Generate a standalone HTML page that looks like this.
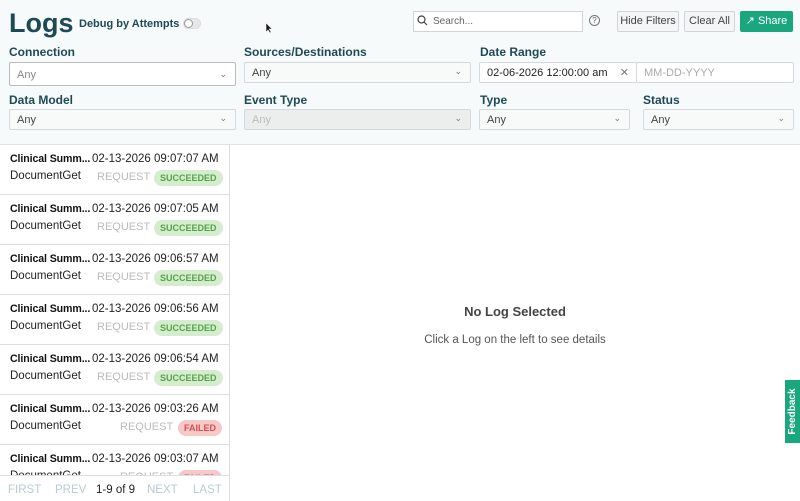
<!DOCTYPE html><html><head><style>
*{box-sizing:border-box;margin:0;padding:0}
body{width:800px;height:501px;overflow:hidden;background:#fff;font-family:"Liberation Sans",sans-serif;position:relative;color:#222}
.hdr{position:absolute;left:0;top:0;width:800px;height:145px;background:#f6fafb;border-bottom:1px solid #dde3e6}
.abs{position:absolute;white-space:nowrap}
.lbl{position:absolute;font-size:12px;font-weight:bold;color:#1e4a55}
.sel{position:absolute;height:21px;border:1px solid #d4d9dc;background:#f8f9f9;border-radius:2px;font-size:11px;color:#444;padding:4px 7px}
.sel .c{position:absolute;right:8px;top:3px;font-size:9px;color:#777}
.btn{position:absolute;top:11px;height:21px;border:1px solid #d0d5d8;background:#f3f5f6;font-size:11px;color:#444;text-align:center;line-height:19px;border-radius:2px}
.item{position:absolute;left:0;width:229px;height:50px;border-bottom:1px solid #dcdfe1}
.item span{white-space:nowrap}
.item .t{position:absolute;left:10px;top:8px;font-size:10.6px;font-weight:bold;color:#111;letter-spacing:-0.1px}
.item .d{position:absolute;left:92px;top:8px;font-size:11.5px;color:#222}
.item .n{position:absolute;left:10px;top:25px;font-size:11.5px;color:#222}
.item .r{position:absolute;top:26px;font-size:11px;color:#bbb}
.badge{position:absolute;top:25px;height:16px;border-radius:8px;font-size:9px;font-weight:bold;line-height:16px;padding:0 6px}
.s{background:#d6ecce;color:#52a547;left:154px}
.f{background:#f6c9c8;color:#d45050;left:178px}
</style></head><body>
<div class="hdr"></div>
<div class="abs" style="left:9px;top:8px;font-size:27px;font-weight:bold;color:#1e4a55">Logs</div>
<div class="abs" style="left:79px;top:18px;font-size:11px;font-weight:bold;color:#1e4a55">Debug by Attempts</div>
<div class="abs" style="left:183px;top:18px;width:18px;height:11px;border-radius:6px;background:#e6e9ea;border:1px solid #ddd"><div style="position:absolute;left:0;top:0;width:9px;height:9px;border-radius:50%;background:#fff;border:1px solid #999"></div></div>
<div class="abs" style="left:413px;top:11px;width:170px;height:21px;border:1px solid #d0d5d8;background:#fff;font-size:10px;color:#666;padding:4px 0 0 19px">Search...</div>
<svg class="abs" style="left:417px;top:15px" width="11" height="11"><circle cx="4.5" cy="4.5" r="3.5" fill="none" stroke="#444" stroke-width="1.2"/><path d="M7 7l3 3" stroke="#444" stroke-width="1.2"/></svg>
<div class="abs" style="left:589px;top:15px;width:11px;height:11px;border:1px solid #777;border-radius:50%;font-size:8px;text-align:center;line-height:9px;color:#666">?</div>
<div class="btn" style="left:617px;width:62px">Hide Filters</div>
<div class="btn" style="left:684px;width:51px">Clear All</div>
<div class="btn" style="left:740px;width:53px;background:#1aa77e;border-color:#1aa77e;color:#fff">&#x2197; Share</div>
<div class="lbl" style="left:9px;top:45px">Connection</div>
<div class="lbl" style="left:244px;top:45px">Sources/Destinations</div>
<div class="lbl" style="left:480px;top:45px">Date Range</div>
<div class="sel" style="left:9px;top:62px;width:227px;height:24px;background:#fff;border-color:#bbb;color:#888;padding-top:6px">Any<span class="c" style="top:6px">&#8964;</span></div>
<div class="sel" style="left:244px;top:62px;width:227px">Any<span class="c">&#8964;</span></div>
<div class="sel" style="left:479px;top:62px;width:158px;background:#fff;color:#222">02-06-2026 12:00:00 am<span class="c" style="font-size:11px;top:3px;right:7px">&#x2715;</span></div>
<div class="sel" style="left:636px;top:62px;width:158px;background:#fff;color:#aaa">MM-DD-YYYY</div>
<div class="lbl" style="left:9px;top:93px">Data Model</div>
<div class="lbl" style="left:244px;top:93px">Event Type</div>
<div class="lbl" style="left:480px;top:93px">Type</div>
<div class="lbl" style="left:643px;top:93px">Status</div>
<div class="sel" style="left:9px;top:109px;width:227px">Any<span class="c">&#8964;</span></div>
<div class="sel" style="left:244px;top:109px;width:227px;background:#eceeee;color:#bbb">Any<span class="c">&#8964;</span></div>
<div class="sel" style="left:479px;top:109px;width:151px">Any<span class="c">&#8964;</span></div>
<div class="sel" style="left:643px;top:109px;width:151px">Any<span class="c">&#8964;</span></div>
<div class="abs" style="left:229px;top:145px;width:1px;height:356px;background:#dcdfe1"></div>
<div class="item" style="top:145px"><span class="t">Clinical Summ...</span><span class="d">02-13-2026 09:07:07 AM</span><span class="n">DocumentGet</span><span class="r" style="left:97px">REQUEST</span><span class="badge s">SUCCEEDED</span></div>
<div class="item" style="top:195px"><span class="t">Clinical Summ...</span><span class="d">02-13-2026 09:07:05 AM</span><span class="n">DocumentGet</span><span class="r" style="left:97px">REQUEST</span><span class="badge s">SUCCEEDED</span></div>
<div class="item" style="top:245px"><span class="t">Clinical Summ...</span><span class="d">02-13-2026 09:06:57 AM</span><span class="n">DocumentGet</span><span class="r" style="left:97px">REQUEST</span><span class="badge s">SUCCEEDED</span></div>
<div class="item" style="top:295px"><span class="t">Clinical Summ...</span><span class="d">02-13-2026 09:06:56 AM</span><span class="n">DocumentGet</span><span class="r" style="left:97px">REQUEST</span><span class="badge s">SUCCEEDED</span></div>
<div class="item" style="top:345px"><span class="t">Clinical Summ...</span><span class="d">02-13-2026 09:06:54 AM</span><span class="n">DocumentGet</span><span class="r" style="left:97px">REQUEST</span><span class="badge s">SUCCEEDED</span></div>
<div class="item" style="top:395px"><span class="t">Clinical Summ...</span><span class="d">02-13-2026 09:03:26 AM</span><span class="n">DocumentGet</span><span class="r" style="left:120px">REQUEST</span><span class="badge f">FAILED</span></div>
<div class="item" style="top:445px;height:30px;overflow:hidden;border:none"><span class="t">Clinical Summ...</span><span class="d">02-13-2026 09:03:07 AM</span><span class="n">DocumentGet</span><span class="r" style="left:120px">REQUEST</span><span class="badge f">FAILED</span></div>
<div class="abs" style="left:0;top:475px;width:229px;height:26px;border-top:1px solid #dcdfe1;background:#fff;font-size:11.5px;color:#b8ccd0">
<span class="abs" style="left:8px;top:8px">FIRST</span><span class="abs" style="left:55px;top:8px">PREV</span><span class="abs" style="left:96px;top:8px;color:#222">1-9 of 9</span><span class="abs" style="left:147px;top:8px">NEXT</span><span class="abs" style="left:193px;top:8px">LAST</span></div>
<div class="abs" style="left:230px;top:304px;width:570px;text-align:center;font-size:13px;font-weight:bold;color:#444">No Log Selected</div>
<div class="abs" style="left:230px;top:334px;width:570px;text-align:center;font-size:11.5px;color:#555">Click a Log on the left to see details</div>
<div class="abs" style="left:785px;top:380px;width:15px;height:63px;background:#1aa77e"><div style="position:absolute;left:-24px;top:24px;width:63px;transform:rotate(-90deg);color:#fff;font-size:10px;font-weight:bold;text-align:center;line-height:15px">Feedback</div></div>
<svg class="abs" style="left:265px;top:22px" width="8" height="12"><path d="M1 1v9l2-2 2 3 1-1-2-3h3z" fill="#222" stroke="#fff" stroke-width=".5"/></svg>
</body></html>
